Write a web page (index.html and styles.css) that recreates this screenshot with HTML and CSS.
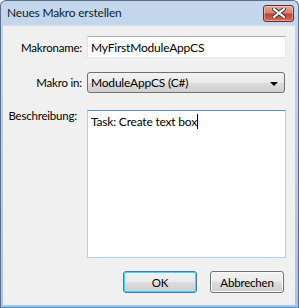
FILE: index.html
```html
<!DOCTYPE html>
<html lang="de">
<head>
    <meta charset="UTF-8">
    <title>Neues Makro erstellen</title>
    <link rel="stylesheet" href="styles.css">
</head>
<body>
    <div class="window">
        <div class="titlebar">
            <span class="title">Neues Makro erstellen</span>
            <button class="close" aria-label="Schließen">
                <svg width="14" height="10" viewBox="0 0 14 10">
                    <path d="M2 1 L12 9 M12 1 L2 9" stroke="#3d3d3d" stroke-width="4" stroke-linecap="square"/>
                    <path d="M2 1 L12 9 M12 1 L2 9" stroke="#fff" stroke-width="2" stroke-linecap="square"/>
                </svg>
            </button>
        </div>

        <div class="client">
            <div class="row">
                <label class="label">Makroname:</label>
                <div class="textbox">MyFirstModuleAppCS</div>
            </div>

            <div class="row row-combo">
                <label class="label">Makro in:</label>
                <div class="combo">
                    <span>ModuleAppCS (C#)</span>
                    <span class="arrow"></span>
                </div>
            </div>

            <div class="row row-desc">
                <label class="label label-desc">Beschreibung:</label>
                <div class="memo">Task: Create text box<span class="caret"></span></div>
            </div>

            <div class="buttons">
                <button class="btn btn-default">OK</button>
                <button class="btn">Abbrechen</button>
            </div>
        </div>
    </div>
</body>
</html>
```

FILE: styles.css
```css
body {
    margin: 0;
    background: #fff;
    font-family: Lato, "Open Sans", sans-serif;
    font-size: 11.5px;
    letter-spacing: -0.2px;
    color: #000;
}

.window {
    width: 299px;
    height: 308px;
    box-sizing: border-box;
    display: flex;
    flex-direction: column;
    background: linear-gradient(#c4d7ec, #a9c4e3);
    border: 1px solid #5a6f8c;
    border-bottom-color: #3a9ad4;
    border-radius: 6px 6px 0 0;
    padding: 0 3px 2px 2px;
}

/* Title bar */
.titlebar {
    height: 24px;
    display: flex;
    align-items: center;
    justify-content: space-between;
    padding: 0 1px 0 4px;
}

.title {
    color: #0f1e33;
    font-size: 12px;
    margin-top: -1px;
}

.close {
    width: 31px;
    height: 17px;
    padding: 0;
    display: flex;
    align-items: center;
    justify-content: center;
    border: 1px solid #6e2a22;
    border-radius: 3px;
    background: linear-gradient(#e0a89c 0%, #d48474 45%, #c2432f 55%, #d2705c 100%);
    box-shadow: inset 0 0 0 1px rgba(255, 255, 255, 0.35);
}

/* Client area */
.client {
    flex: 1;
    background: #f0f0f0;
    border-top: 1px solid #d4dde8;
    padding: 10px 9px 12px 0;
    display: flex;
    flex-direction: column;
}

.row {
    display: flex;
    align-items: center;
}

.label {
    width: 79px;
    flex-shrink: 0;
    text-align: right;
    margin-right: 5px;
    color: #000;
}

.textbox {
    flex: 1;
    height: 22px;
    box-sizing: border-box;
    padding: 3px 3px 0;
    font-size: 12px;
    background: #fff;
    border: 1px solid #e3e9ef;
    border-top-color: #abadb3;
    border-left-color: #e2e3ea;
}

.row-combo {
    margin-top: 14px;
}

.combo {
    flex: 1;
    height: 21px;
    box-sizing: border-box;
    margin-right: 1px;
    padding: 2px 3px 0;
    display: flex;
    justify-content: space-between;
    font-size: 12px;
    background: linear-gradient(#f2f2f2 0%, #ebebeb 50%, #dddddd 51%, #cfcfcf 100%);
    border: 1px solid #707070;
    border-radius: 3px;
}

.arrow {
    width: 0;
    height: 0;
    margin: 7px 3px 0 0;
    border-left: 4px solid transparent;
    border-right: 4px solid transparent;
    border-top: 4px solid #000;
}

.row-desc {
    margin-top: 17px;
    align-items: flex-start;
}

.label-desc {
    padding-right: 5px;
    box-sizing: border-box;
    text-align: right;
    margin-top: -1px;
}

.memo {
    flex: 1;
    height: 148px;
    box-sizing: border-box;
    padding: 3px 3px 0;
    font-size: 12px;
    background: #fff;
    border: 1px solid #b4d0ec;
    border-top-color: #5d93c9;
}

.caret {
    display: inline-block;
    width: 1px;
    height: 15px;
    background: #000;
    vertical-align: -3px;
}

/* Buttons */
.buttons {
    margin-top: 13px;
    display: flex;
    justify-content: flex-end;
    gap: 13px;
    padding-right: 2px;
}

.btn {
    width: 74px;
    height: 22px;
    padding: 0;
    font-family: inherit;
    font-size: 11.5px;
    letter-spacing: -0.2px;
    color: #000;
    background: linear-gradient(#f2f2f2 0%, #ebebeb 50%, #dddddd 51%, #cfcfcf 100%);
    border: 1px solid #707070;
    border-radius: 3px;
    box-shadow: inset 0 0 0 1px #fcfcfc;
}

.btn-default {
    border-color: #3c7fb1;
    box-shadow: inset 0 0 0 1px #48d3fb;
}
```
